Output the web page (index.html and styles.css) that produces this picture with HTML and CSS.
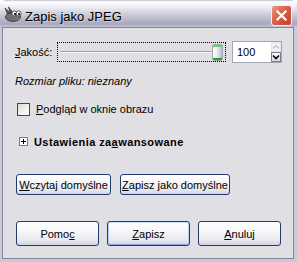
FILE: index.html
```html
<!DOCTYPE html>
<html lang="pl">
<head>
  <meta charset="UTF-8" />
  <title>Zapis jako JPEG</title>
  <link rel="stylesheet" href="styles.css">
</head>
<body>

<div class="window">
  <div class="titlebar">
    <svg class="app-icon" width="18" height="16" viewBox="0 0 18 16">
      <path d="M1 2 L6.5 7 L3.5 8.5 Z" fill="#5a5a5a" stroke="#2a2a2a" stroke-width="0.6"/>
      <path d="M4.5 0.8 L8.5 6 L6 7 Z" fill="#5a5a5a" stroke="#2a2a2a" stroke-width="0.6"/>
      <ellipse cx="9" cy="11" rx="7.6" ry="4.4" fill="#707070" stroke="#2e2e2e" stroke-width="0.8"/>
      <circle cx="10.4" cy="7.4" r="2.5" fill="#fff" stroke="#222" stroke-width="0.7"/>
      <circle cx="14.6" cy="7.4" r="2.5" fill="#fff" stroke="#222" stroke-width="0.7"/>
      <circle cx="11" cy="8" r="1.1" fill="#000"/>
      <circle cx="15.1" cy="8" r="1.1" fill="#000"/>
      <path d="M10.5 12.5 Q13 14.3 16 12.2" fill="none" stroke="#a8703a" stroke-width="1.2"/>
    </svg>
    <span class="title">Zapis jako JPEG</span>
    <div class="close">
      <svg width="21" height="21" viewBox="0 0 21 21">
        <path d="M6 6 L15 15 M15 6 L6 15" stroke="#fff" stroke-width="2.4" stroke-linecap="square"/>
      </svg>
    </div>
  </div>

  <div class="frame">
    <div class="client">

      <div class="quality-row">
        <span class="quality-label"><u>J</u>akość:</span>
        <div class="slider">
          <div class="track"></div>
          <div class="thumb"></div>
        </div>
        <div class="spin">
          <span class="spin-value">100</span>
          <div class="spin-buttons">
            <span class="spin-up">
              <svg width="8" height="8" viewBox="0 0 8 8"><path d="M1 5.5 L4 2.5 L7 5.5" fill="none" stroke="#c4c4cc" stroke-width="1.4"/></svg>
            </span>
            <span class="spin-down">
              <svg width="8" height="8" viewBox="0 0 8 8"><path d="M1 2.5 L4 5.5 L7 2.5" fill="none" stroke="#000" stroke-width="1.6"/></svg>
            </span>
          </div>
        </div>
      </div>

      <p class="filesize">Rozmiar pliku: nieznany</p>

      <div class="check-row">
        <span class="checkbox"></span>
        <span class="check-label"><u>P</u>odgląd w oknie obrazu</span>
      </div>

      <div class="expander">
        <svg class="expander-box" width="9" height="9" viewBox="0 0 9 9">
          <rect x="0.5" y="0.5" width="8" height="8" fill="#fff" stroke="#7d7d86"/>
          <path d="M2 4.5 H7 M4.5 2 V7" stroke="#000" stroke-width="1"/>
        </svg>
        <span class="expander-label">Ustawienia za<u>a</u>wansowane</span>
      </div>

      <div class="defaults-row">
        <button class="btn btn-load"><u>W</u>czytaj domyślne</button>
        <button class="btn btn-store"><u>Z</u>apisz jako domyślne</button>
      </div>

      <div class="dialog-buttons">
        <button class="btn btn-dialog">Pomo<u>c</u></button>
        <button class="btn btn-dialog btn-default"><u>Z</u>apisz</button>
        <button class="btn btn-dialog"><u>A</u>nuluj</button>
      </div>

    </div>
  </div>
</div>

</body>
</html>
```

FILE: styles.css
```css
body {
  margin: 0;
  background: #fff;
  font-family: "Liberation Sans", Arial, sans-serif;
  font-size: 11px;
  color: #000;
}
u {
  text-decoration: underline;
  text-underline-offset: 1px;
}

.window {
  width: 297px;
  height: 262px;
  display: flex;
  flex-direction: column;
  border-radius: 7px 7px 0 0;
  overflow: hidden;
  background: #c9c9d7;
}
.titlebar {
  height: 27px;
  flex: none;
  display: flex;
  align-items: flex-start;
  padding: 0 5px 0 4px;
  background: linear-gradient(#a7a7b9 0, #f4f4f7 1px, #fdfdfe 3px, #ededf2 7px, #d7d7e2 12px, #c2c2d2 17px, #adadc3 22px, #a9a9bf 24px, #c3c3d2 27px);
}
.app-icon {
  margin-top: 6px;
}
.title {
  margin: 9px 0 0 3px;
  font-size: 13px;
  line-height: 15px;
  text-shadow: 1px 1px 0 rgba(255, 255, 255, 0.35);
}
.close {
  margin: 5px 0 0 auto;
  width: 19px;
  height: 19px;
  border: 1px solid #f2f2f6;
  border-radius: 3px;
  background: linear-gradient(135deg, #ea9a82, #d6604a 45%, #c3402b);
  display: flex;
  align-items: center;
  justify-content: center;
}
.close svg {
  width: 19px;
  height: 19px;
}

.frame {
  flex: 1;
  display: flex;
  padding: 0 3px 3px 2px;
}
.client {
  flex: 1;
  border: 1px solid #85859b;
  background: #e0dfe3;
  padding: 0 11px 12px 12px;
  display: flex;
  flex-direction: column;
}

.quality-row {
  margin-top: 13px;
  height: 22px;
  display: flex;
  align-items: center;
}
.quality-label {
  width: 35px;
  line-height: 13px;
}
.slider {
  flex: 1;
  margin-left: 7px;
  height: 20px;
  box-sizing: border-box;
  border: 1px dotted #000;
  padding: 0 2px;
  display: flex;
  align-items: center;
}
.track {
  flex: 1;
  height: 2px;
  background: linear-gradient(#a3a296 50%, #f3f3ef 50%);
}
.thumb {
  width: 11px;
  height: 17px;
  box-sizing: border-box;
  border: 1px solid #a9a9b6;
  border-radius: 2px;
  background: linear-gradient(90deg, #ffffff, #ebebf0 45%, #b9b9c6);
  box-shadow: inset 0 2px 0 #69cf69, inset 0 -2px 0 #21a121;
}
.spin {
  width: 50px;
  height: 22px;
  margin-left: 6px;
  box-sizing: border-box;
  border: 1px solid #a5a5b3;
  background: #fff;
  display: flex;
}
.spin-value {
  flex: 1;
  padding-left: 4px;
  line-height: 20px;
}
.spin-buttons {
  width: 10px;
  display: flex;
  flex-direction: column;
}
.spin-up,
.spin-down {
  height: 10px;
  box-sizing: border-box;
  display: flex;
  align-items: center;
  justify-content: center;
}
.spin-up {
  border: 1px solid #e4e4ea;
  background: #f3f3f6;
}
.spin-down {
  border: 1px solid #7c7c8c;
  background: linear-gradient(#fdfdfd, #d9d9e2);
}

.filesize {
  margin: 12px 0 0;
  line-height: 13px;
  font-style: italic;
}

.check-row {
  margin-top: 15px;
  height: 13px;
  display: flex;
  align-items: center;
}
.checkbox {
  width: 13px;
  height: 13px;
  box-sizing: border-box;
  margin-left: 2px;
  border: 1px solid #1f4f7c;
  background: linear-gradient(135deg, #dcdcd6, #fbfbf9 85%);
}
.check-label {
  margin-left: 6px;
  line-height: 13px;
}

.expander {
  margin-top: 20px;
  height: 13px;
  display: flex;
  align-items: flex-start;
}
.expander-box {
  margin: 1px 0 0 4px;
}
.expander-label {
  margin-left: 6px;
  line-height: 13px;
  font-weight: bold;
  letter-spacing: 0.42px;
}

.btn {
  box-sizing: border-box;
  height: 21px;
  padding: 0;
  border: 1px solid #1e3c6c;
  border-radius: 3px;
  background: linear-gradient(#ffffff, #f5f5f8 45%, #e7e7ef 80%, #d2d2df);
  font: inherit;
  color: #000;
  text-align: center;
}
.defaults-row {
  margin: 25px 0 0 1px;
  display: flex;
  gap: 9px;
}
.btn-load {
  width: 95px;
}
.btn-store {
  width: 110px;
}
.dialog-buttons {
  margin: 26px 0 0 1px;
  display: flex;
  gap: 8px;
}
.btn-dialog {
  width: 83px;
  height: 25px;
}
.btn-default {
  box-shadow: inset 0 1px 0 #d2e2fb, inset 1px 0 0 #bccef4, inset -1px 0 0 #bccef4, inset 0 -1px 0 #8d9fe6;
}
```
